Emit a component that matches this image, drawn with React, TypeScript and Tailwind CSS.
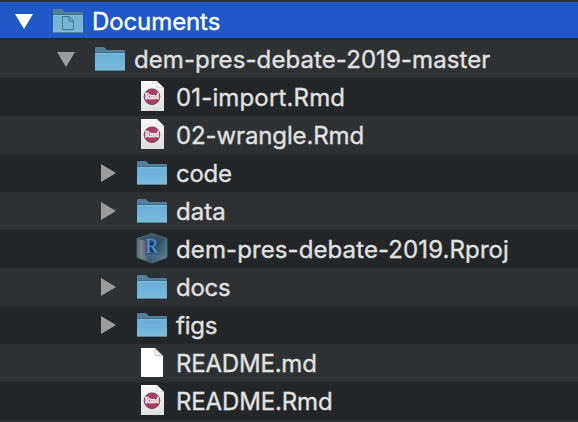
type Kind = "documents" | "folder" | "rmd" | "blank" | "rproj";

interface Item {
  name: string;
  kind: Kind;
  indent: string;
  tracking: string;
  arrow?: "down" | "right";
  row: string;
}

const LIGHT = "h-[38px] bg-[#2e3134]";
const DARK = "h-[38px] bg-[#232629]";

const items: Item[] = [
  { name: "Documents", kind: "documents", indent: "pl-[9px]", tracking: "tracking-[-0.1px]", arrow: "down", row: "h-9 pt-0.5 bg-[#2059c7] text-white" },
  { name: "dem-pres-debate-2019-master", kind: "folder", indent: "pl-[51px]", tracking: "tracking-[0.09px]", arrow: "down", row: "h-10 border-t-2 border-[#25282c] bg-[#2e3134]" },
  { name: "01-import.Rmd", kind: "rmd", indent: "pl-[93px]", tracking: "tracking-[0.15px]", row: DARK },
  { name: "02-wrangle.Rmd", kind: "rmd", indent: "pl-[93px]", tracking: "tracking-[-0.12px]", row: LIGHT },
  { name: "code", kind: "folder", indent: "pl-[93px]", tracking: "tracking-[-0.25px]", arrow: "right", row: DARK },
  { name: "data", kind: "folder", indent: "pl-[93px]", tracking: "tracking-[0px]", arrow: "right", row: LIGHT },
  { name: "dem-pres-debate-2019.Rproj", kind: "rproj", indent: "pl-[93px]", tracking: "tracking-[0.1px]", row: DARK },
  { name: "docs", kind: "folder", indent: "pl-[93px]", tracking: "tracking-[-0.25px]", arrow: "right", row: LIGHT },
  { name: "figs", kind: "folder", indent: "pl-[93px]", tracking: "tracking-[-0.2px]", arrow: "right", row: DARK },
  { name: "README.md", kind: "blank", indent: "pl-[93px]", tracking: "tracking-[-0.2px]", row: LIGHT },
  { name: "README.Rmd", kind: "rmd", indent: "pl-[93px]", tracking: "tracking-[-0.15px]", row: DARK },
];

function Gradients() {
  return (
    <svg className="absolute h-0 w-0" aria-hidden="true">
      <defs>
        <linearGradient id="front" x1="0" y1="0" x2="0" y2="1">
          <stop offset="0" stopColor="#69add5" />
          <stop offset="0.65" stopColor="#75b5da" />
          <stop offset="1" stopColor="#7dbbda" />
        </linearGradient>
        <linearGradient id="paper" x1="0" y1="0" x2="0" y2="1">
          <stop offset="0" stopColor="#f8f8f8" />
          <stop offset="1" stopColor="#dedfe0" />
        </linearGradient>
        <linearGradient id="cubeLeft" x1="0" y1="0" x2="1" y2="0">
          <stop offset="0" stopColor="#59676f" />
          <stop offset="0.3" stopColor="#7d878d" />
          <stop offset="0.65" stopColor="#46545f" />
          <stop offset="1" stopColor="#25384a" />
        </linearGradient>
        <linearGradient id="cubeRight" x1="0" y1="0" x2="1" y2="0.6">
          <stop offset="0" stopColor="#24384a" />
          <stop offset="1" stopColor="#4f788c" />
        </linearGradient>
      </defs>
    </svg>
  );
}

function Folder({ documents = false }: { documents?: boolean }) {
  return (
    <svg width="32" height="32" viewBox="0 0 32 32">
      <path d="M1 27V5.200Q1 4 2.300 4H9q1 0 1.800.8l1.400 1.600q.7.600 1.600.6H29.800Q31 7 31 8.200V27Z" fill={documents ? "#507f96" : "#527f99"} />
      <path d="M1 9h30v1H1Z" fill="#42718b" />
      <path d="M1 10.200h30V26.500Q31 28 29.700 28H2.300Q1 28 1 26.500Z" fill="url(#front)" />
      {documents && <path d="M1 10.200h30V28H1Z" fill="#80b9ca" opacity="0.4" />}
      <path d="M1.500 10.700h29" stroke="#8fc5e2" strokeWidth="0.8" />
      <path d="M1.500 27.500h29" stroke="#54849b" strokeWidth="1" />
      {documents && (
        <path d="M10.500 11.500h6.500l4.500 4.500v8.500h-11ZM17 11.700v4.300h4.300" fill="none" stroke="#39799a" strokeWidth="1" />
      )}
    </svg>
  );
}

function Page({ rmd = false }: { rmd?: boolean }) {
  if (!rmd) {
    return (
      <svg width="32" height="32" viewBox="0 0 32 32">
        <path d="M5 1h14l8 8v21H5Z" fill="#fff" />
        <path d="M18.500 1v8H27Z" fill="#c9cacb" />
        <path d="M19.500 3v5h5Z" fill="#f4f4f4" />
      </svg>
    );
  }
  return (
    <svg width="32" height="32" viewBox="0 0 32 32">
      <path d="M5 0h16l7 7v23H5Z" fill="url(#paper)" />
      <path d="M20.500 0v7H28Z" fill="#d2d3d4" />
      <path d="M21.300 1.500v4.700h5.200Z" fill="#fff" />
      <circle cx="16" cy="15.700" r="7.800" fill="#a63f67" stroke="#7b4256" strokeWidth="1" />
      <text x="16" y="18.200" textAnchor="middle" textLength="14" lengthAdjust="spacingAndGlyphs" fill="#fff" stroke="#fff" strokeWidth="0.3" className="font-['Liberation_Serif',serif] text-[8px] font-bold">Rmd</text>
    </svg>
  );
}

function Cube() {
  return (
    <svg width="32" height="32" viewBox="0 0 32 32">
      <path d="M16 .5 31 5.500v19L16 30 1 24.500V5.500Z" fill="#2b4050" />
      <path d="M1 5.500 16 9V30L1 24.500Z" fill="url(#cubeLeft)" />
      <path d="M31 5.500 16 9V30L31 24.500Z" fill="url(#cubeRight)" />
      <path d="M16 .5 31 5.500 16 9 1 5.500Z" fill="#3f5563" />
      <path d="M16 .5 31 5.500v19L16 30 1 24.500V5.500Z" fill="none" stroke="#557a8c" strokeWidth="0.700" />
      <path d="m2 24 14-4 14 4-14 5.500Z" fill="#6594ad" opacity="0.35" />
      <path d="M12 22.500h3m3 0 3 .8m-7 1.300h3" stroke="#2f78b4" strokeWidth="1" />
      <text x="16" y="19.700" textAnchor="middle" fill="#4593ec" className="font-['Liberation_Serif',serif] text-[20px]">R</text>
    </svg>
  );
}

function Icon({ kind }: { kind: Kind }) {
  if (kind === "documents") return <Folder documents />;
  if (kind === "folder") return <Folder />;
  if (kind === "rproj") return <Cube />;
  return <Page rmd={kind === "rmd"} />;
}

function Arrow({ direction, active }: { direction?: "down" | "right"; active: boolean }) {
  return (
    <svg width="30" height="30" viewBox="0 0 30 30" className="shrink-0">
      {direction === "down" && <path d="M6 8h18l-9 15Z" fill={active ? "#fff" : "#9b9c9e"} />}
      {direction === "right" && <path d="M8 6v18l15-9Z" fill="#9b9c9e" />}
    </svg>
  );
}

export default function App() {
  return (
    <main className="relative h-[422px] w-[578px] overflow-hidden bg-[#2e3134] pt-0.5 font-['Inter',sans-serif] text-[24px] leading-[34px] text-[#e0e1e1]">
      <Gradients />
      <ul>
        {items.map((item) => (
          <li key={item.name} className={`flex items-center whitespace-nowrap ${item.row} ${item.indent}`}>
            <Arrow direction={item.arrow} active={item.kind === "documents"} />
            <span className="ml-[13px] shrink-0"><Icon kind={item.kind} /></span>
            <span className={`ml-2 pt-0.5 [-webkit-text-stroke:0.35px_currentColor] ${item.tracking}`}>{item.name}</span>
          </li>
        ))}
      </ul>
    </main>
  );
}
